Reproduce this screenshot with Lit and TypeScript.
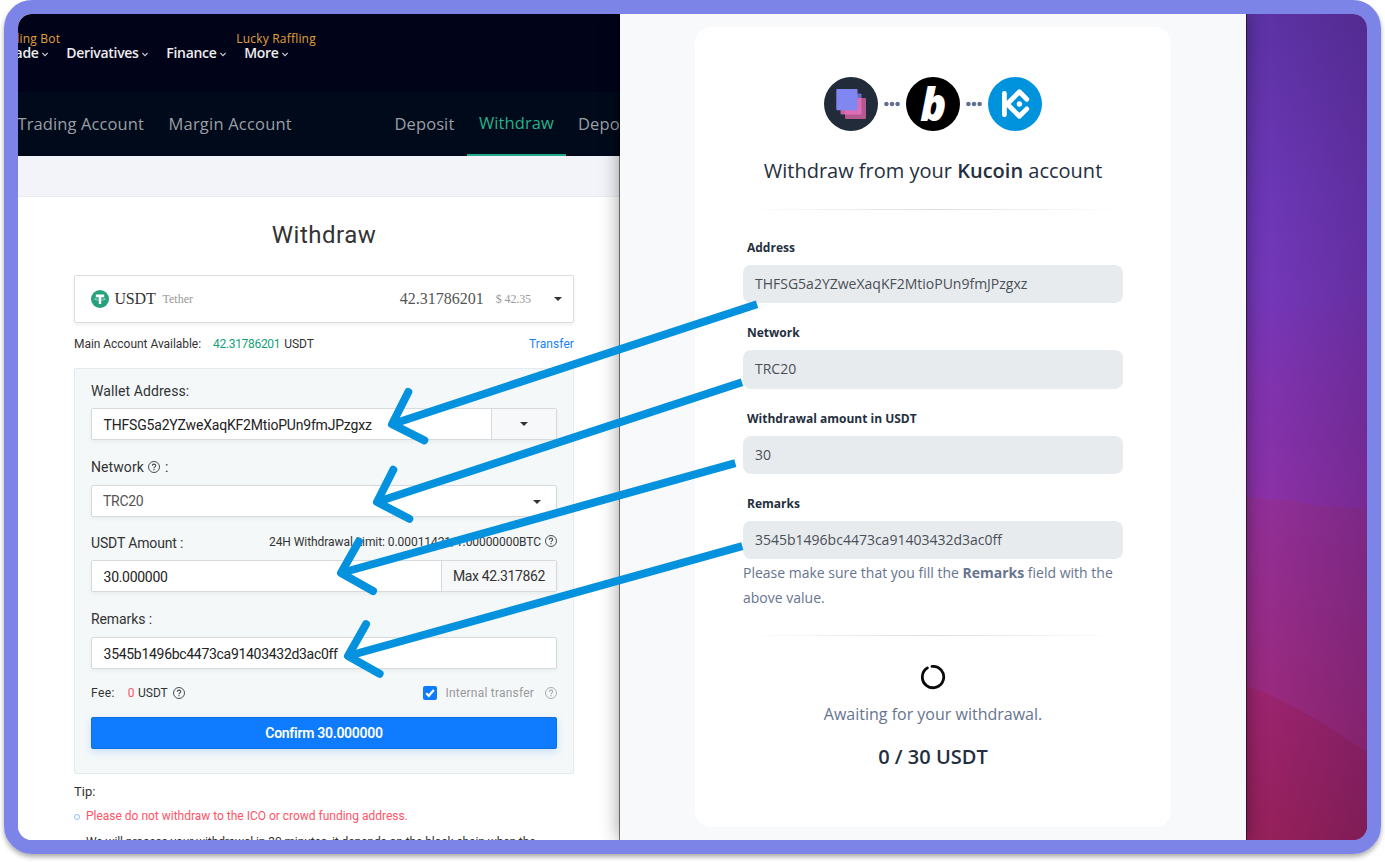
import { LitElement, html, svg, css } from "lit";
import { customElement } from "lit/decorators.js";

@customElement("help-icon")
class HelpIcon extends LitElement {
  static styles = css`
    :host { display: block; flex: none; width: 12px; height: 12px; color: #444; }
    svg { display: block; }
  `;
  render() {
    return html`<svg width="12" height="12" viewBox="0 0 12 12" fill="none" stroke="currentColor">
      <circle cx="6" cy="6" r="5.5" stroke-width=".95"></circle>
      <path d="M4.3 4.8C4.3 2.6 7.7 2.6 7.7 4.7C7.7 5.9 6 5.8 6 7.2" stroke-width="1.05"></path>
      <path d="M6 8.1V9.2" stroke-width="1.1"></path>
    </svg>`;
  }
}

@customElement("exchange-pane")
class ExchangePane extends LitElement {
  static styles = css`
    :host { display: flex; flex-direction: column; overflow: hidden; background: #fff; color: #333; font-family: Roboto, "Noto Sans", sans-serif; white-space: nowrap; }
    .nav { flex: none; height: 78px; background: #010419; display: flex; gap: 18.7px; padding-top: 29px; box-sizing: border-box; font: 600 14px/20px "Open Sans", sans-serif; letter-spacing: -.3px; color: #ededf0; }
    .item { position: relative; height: 20px; display: flex; align-items: center; gap: 3px; flex: none; }
    .item:first-child { margin-left: -16.8px; }
    .item svg { margin-top: 2px; }
    .badge { position: absolute; left: -8px; top: -14px; font: 400 12px/20px "Open Sans", sans-serif; letter-spacing: .2px; color: #e0a03f; }
    .tabs { flex: none; height: 64px; background: #000a1a; display: flex; font: 400 16.5px/62px "Open Sans", sans-serif; letter-spacing: .1px; color: #9a9fa5; }
    .tab { flex: none; padding: 1px 12px 0; box-sizing: border-box; }
    .t1 { width: 138px; margin-left: -12.5px; }
    .t2 { width: 160px; padding-left: 25px; letter-spacing: .2px; }
    .t3 { width: 83px; margin-left: 80px; padding-left: 11px; }
    .t4 { width: 99px; border-bottom: 2px solid #23a889; color: #23b38e; padding: 0; text-align: center; margin-left: .5px; }
    .band { flex: none; height: 41px; background: #f3f4f9; border-bottom: 1px solid #ececf0; box-sizing: border-box; }
    .body { width: 500px; margin-left: 56px; flex: none; }
    .title { height: 78px; display: flex; align-items: center; justify-content: center; font-size: 24px; letter-spacing: .5px; padding-bottom: 2px; box-sizing: border-box; }
    .coin { height: 48px; box-sizing: border-box; border: 1px solid #dadddf; border-radius: 2px; box-shadow: 0 2px 4px rgba(0,0,0,.06); background: #fff; display: flex; align-items: center; padding: 0 11px 0 16px; font: 16px "Liberation Serif", serif; }
    .sym { margin-left: 5.5px; letter-spacing: -.2px; }
    .small { font-size: 12px; color: #999; }
    .name { margin-left: 7px; flex: 1; }
    .bal { color: #555; }
    .usd { margin: 0 23px 0 12px; letter-spacing: -.1px; }
    .caret { width: 0; height: 0; flex: none; border: 4px solid transparent; border-top-color: #333; border-bottom: 0; }
    .avail { height: 45px; display: flex; align-items: center; font-size: 12px; padding-bottom: 3px; box-sizing: border-box; letter-spacing: -.04px; }
    .num { color: #14a077; margin: 0 4px 0 12px; letter-spacing: -.32px; }
    .link { margin-left: auto; color: #1880ff; letter-spacing: .08px; }
    .panel { height: 406px; box-sizing: border-box; border: 1px solid #e4ebee; border-radius: 2px; background: #f4f8f9; padding: 0 16px; }
    .lab { height: 39px; box-sizing: border-box; display: flex; align-items: center; font-size: 14px; }
    .l1 { padding-top: 5px; letter-spacing: .09px; }
    .l2 { height: 45px; padding-top: 9px; letter-spacing: .08px; }
    .l2 help-icon { margin: 0 5px 0 4px; }
    .l3 { height: 43px; padding-top: 9px; letter-spacing: -.15px; }
    .l4 { height: 45px; padding-top: 9px; letter-spacing: -.1px; }
    .limit { margin-left: auto; margin-right: 4px; font-size: 12px; letter-spacing: -.068px; padding-bottom: 2px; }
    .up { margin-bottom: 4px; }
    .box { height: 32px; box-sizing: border-box; border: 1px solid #d6dadd; border-radius: 2px; background: #fff; box-shadow: 0 2px 4px rgba(0,0,0,.05); display: flex; align-items: stretch; font-size: 14px; letter-spacing: -.3px; }
    .val { flex: 1; display: flex; align-items: center; padding: 2px 0 0 11.6px; color: #222; }
    .addr { letter-spacing: -.19px; }
    .sel { color: #555; padding: 0 0 0 11px; }
    .drop { display: flex; align-items: center; padding: 2px 15px 0 0; }
    .end { width: 65px; display: flex; align-items: center; justify-content: center; box-sizing: border-box; background: #f7f8fa; border-left: 1px solid #d6dadd; letter-spacing: -.37px; }
    .max { width: 115px; }
    .fee { height: 48px; display: flex; align-items: center; font-size: 12px; padding-bottom: 1px; box-sizing: border-box; }
    .feelab { letter-spacing: .4px; }
    .red { color: #ff5468; margin: 0 3.5px 0 13px; }
    .fee help-icon { margin-left: 5.5px; }
    .chk { margin: 1px 9px 0 auto; width: 14px; height: 14px; border-radius: 2px; background: #0f7cff; }
    .chk svg { display: block; }
    .grey { color: #999; letter-spacing: .21px; }
    .fee .pale { margin-left: 11px; color: #aaa; }
    .btn { height: 32px; display: flex; align-items: center; justify-content: center; background: #0f7cff; border: 1px solid #1070dc; box-sizing: border-box; border-radius: 2px; box-shadow: 0 3px 8px rgba(15,124,255,.18); color: #fff; font-weight: 600; font-size: 14px; letter-spacing: -.28px; }
    .tip { height: 36px; line-height: 35px; font-size: 13px; }
    .li { height: 26px; display: flex; align-items: flex-start; gap: 6px; font-size: 12px; line-height: 13px; letter-spacing: -.1px; color: #333; }
    .warn { color: #ff5468; letter-spacing: -.01px; }
    .dot { width: 3px; height: 3px; margin-top: 4px; border: 1.5px solid #8ec3f7; border-radius: 50%; flex: none; box-sizing: content-box; padding: .5px; }
  `;
  chev() {
    return html`<svg width="6" height="5" viewBox="0 0 6 5" fill="none" stroke="#c9cad2" stroke-width="1.1"><path d="M.4 1L3 3.6L5.6 1"></path></svg>`;
  }
  render() {
    return html`
      <div class="nav">
        <div class="item"><span class="badge">Trading Bot</span>Trade${this.chev()}</div>
        <div class="item">Derivatives${this.chev()}</div>
        <div class="item">Finance${this.chev()}</div>
        <div class="item"><span class="badge">Lucky Raffling</span>More${this.chev()}</div>
      </div>
      <div class="tabs">
        <div class="tab t1">Trading Account</div><div class="tab t2">Margin Account</div>
        <div class="tab t3">Deposit</div><div class="tab t4">Withdraw</div><div class="tab">Deposit</div>
      </div>
      <div class="band"></div>
      <div class="body">
        <div class="title">Withdraw</div>
        <div class="coin">
          <svg width="18" height="18" viewBox="0 0 18 18"><circle cx="9" cy="9" r="9" fill="#26a17b"></circle>
            <path d="M4.8 4.6H13.2V7H10.2V14H7.8V7H4.8Z" fill="#fff"></path>
            <ellipse cx="9" cy="9" rx="5.4" ry="1.2" fill="none" stroke="#fff" stroke-width=".6" opacity=".8"></ellipse></svg>
          <span class="sym">USDT</span><span class="small name">Tether</span>
          <span class="bal">42.31786201</span><span class="small usd">$ 42.35</span><i class="caret"></i>
        </div>
        <div class="avail"><span>Main Account Available:</span><span class="num">42.31786201</span><span>USDT</span><span class="link">Transfer</span></div>
        <div class="panel">
          <div class="lab l1">Wallet Address:</div>
          <div class="box"><div class="val addr">THFSG5a2YZweXaqKF2MtioPUn9fmJPzgxz</div><div class="end"><i class="caret"></i></div></div>
          <div class="lab l2">Network<help-icon></help-icon>:</div>
          <div class="box"><div class="val sel">TRC20</div><div class="drop"><i class="caret"></i></div></div>
          <div class="lab l3"><span>USDT Amount :</span><span class="limit">24H Withdrawal Limit: 0.00011421/1.00000000BTC</span><help-icon class="up"></help-icon></div>
          <div class="box"><div class="val">30.000000</div><div class="end max">Max 42.317862</div></div>
          <div class="lab l4">Remarks :</div>
          <div class="box"><div class="val">3545b1496bc4473ca91403432d3ac0ff</div></div>
          <div class="fee"><span class="feelab">Fee:</span><span class="red">0</span><span>USDT</span><help-icon></help-icon>
            <span class="chk"><svg width="14" height="14" viewBox="0 0 14 14" fill="none" stroke="#fff" stroke-width="2.2"><path d="M3.3 7.3L5.8 9.8L10.8 4"></path></svg></span>
            <span class="grey">Internal transfer</span><help-icon class="pale"></help-icon></div>
          <div class="btn">Confirm 30.000000</div>
        </div>
        <div class="tip">Tip:</div>
        <div class="li"><i class="dot"></i><span class="warn">Please do not withdraw to the ICO or crowd funding address.</span></div>
        <div class="li"><i class="dot"></i><span>We will process your withdrawal in 30 minutes, it depends on the block chain when the</span></div>
      </div>`;
  }
}

@customElement("payment-pane")
class PaymentPane extends LitElement {
  static styles = css`
    :host { display: flex; justify-content: flex-start; box-sizing: border-box; padding: 13px 0 0 75px; background: #f8f9fb; font-family: "Open Sans", sans-serif; color: #252f40; z-index: 1; box-shadow: 0 0 0 1px rgba(0,0,0,.5), 0 0 18px rgba(0,0,0,.42); }
    .card { width: 476px; height: 800px; background: #fff; border-radius: 16px; box-sizing: border-box; padding: 50px 48px 0; }
    .logos { display: flex; justify-content: center; align-items: center; gap: 6px; height: 54px; }
    svg { display: block; }
    .head { height: 78px; display: flex; align-items: center; justify-content: center; white-space: pre; font-size: 20px; padding-top: 1px; box-sizing: border-box; }
    b { font-weight: 600; }
    .hr { height: 1px; background: linear-gradient(90deg, transparent, rgba(0,0,0,.13), transparent); }
    .fields { padding-top: 20.9px; }
    .field { height: 85.4px; display: flex; flex-direction: column; }
    .lab { height: 34px; line-height: 34px; margin-left: 4px; font-size: 12px; font-weight: 700; }
    .inp { height: 38.4px; line-height: 38px; border-radius: 8px; background: #e8ebee; padding-left: 12px; font-size: 14px; color: #495057; }
    .field:last-child { height: 73.1px; }
    .hint { height: 75px; font-size: 14px; line-height: 25px; color: #67748e; box-sizing: border-box; }
    .hint b { font-weight: 700; }
    .spin { margin: 28px auto 0; width: 26px; }
    .wait { margin-top: 11px; text-align: center; font-size: 16px; line-height: 26px; color: #67748e; }
    .total { margin-top: 15px; text-align: center; font-size: 20px; line-height: 30px; font-weight: 600; }
  `;
  dots() {
    return html`<svg width="16" height="6" viewBox="0 0 16 6" fill="#62708f"><circle cx="2.4" cy="3" r="2.3"></circle><circle cx="8" cy="3" r="2.3"></circle><circle cx="13.6" cy="3" r="2.3"></circle></svg>`;
  }
  render() {
    const fields = [
      ["Address", "THFSG5a2YZweXaqKF2MtioPUn9fmJPzgxz"],
      ["Network", "TRC20"],
      ["Withdrawal amount in USDT", "30"],
      ["Remarks", "3545b1496bc4473ca91403432d3ac0ff"],
    ];
    return html`<div class="card">
      <div class="logos">
        <svg width="54" height="54" viewBox="0 0 54 54"><circle cx="27" cy="27" r="27" fill="#212b3a"></circle>
          <rect x="21" y="21" width="21" height="21" rx="1" fill="#b5588f"></rect>
          <path d="M16.5 33V36.5Q16.5 37.5 17.5 37.5H37.5V33Z" fill="#c960a4"></path>
          <path d="M33 16.5H36.5Q37.5 16.5 37.5 17.5V21H33Z" fill="#666dbd"></path>
          <rect x="21" y="21" width="16.5" height="16.5" fill="#dc6db6"></rect>
          <rect x="12.3" y="12" width="21.2" height="21.2" rx="1" fill="#8187f0"></rect></svg>
        ${this.dots()}
        <svg width="54" height="54" viewBox="0 0 54 54"><circle cx="27" cy="27" r="27"></circle>
          <text transform="translate(14.3 44.3) scale(.94 1)" font-family="Open Sans" font-weight="800" font-style="italic" font-size="46" fill="#fff">b</text></svg>
        ${this.dots()}
        <svg width="54" height="54" viewBox="0 0 54 54"><circle cx="27" cy="27" r="27" fill="#0093dd"></circle>
          <g fill="none" stroke="#fff" stroke-width="4.8" stroke-linecap="round" stroke-linejoin="round">
            <path d="M16.4 16.4V37.8"></path><path d="M38.8 22.2L31.4 14.8L19.2 27L31.4 39.3L38.8 31.9"></path></g>
          <circle cx="31.4" cy="27" r="2.7" fill="#fff"></circle></svg>
      </div>
      <div class="head">Withdraw from your <b>Kucoin</b> account</div>
      <div class="hr"></div>
      <div class="fields">${fields.map(([l, v]) => html`<div class="field"><div class="lab">${l}</div><div class="inp">${v}</div></div>`)}</div>
      <div class="hint">Please make sure that you fill the <b>Remarks</b> field with the above value.</div>
      <div class="hr"></div>
      <svg class="spin" width="26" height="26" viewBox="0 0 26 26" fill="none" stroke="#0a0a0a" stroke-width="2.8" stroke-linecap="round"><path d="M12 2.35A10.7 10.7 0 1 1 7.4 3.9"></path></svg>
      <div class="wait">Awaiting for your withdrawal.</div>
      <div class="total">0 / 30 USDT</div>
    </div>`;
  }
}

@customElement("app-root")
class AppRoot extends LitElement {
  static styles = css`
    :host { display: block; position: relative; width: 1385px; height: 862px; overflow: hidden; background: #fff; }
    .frame { margin-left: 4px; width: 1377px; height: 854px; box-sizing: border-box; border: 14px solid #7c84e8; border-radius: 28px; box-shadow: 0 3px 5px rgba(0,0,0,.33); display: flex; }
    .screen { flex: 1; display: grid; grid-template-columns: 602px 626px 121px; grid-template-rows: 826px; overflow: hidden; border-radius: 14px; }
    .wall svg { display: block; }
    .arrows { position: absolute; left: 0; top: 0; pointer-events: none; z-index: 2; }
  `;
  render() {
    const arrows = [
      [757, 304.2, 392, 424.2, 408.3, 392, 424.3, 440.3],
      [742, 382.2, 377, 502, 393.3, 469.8, 409.3, 518.8],
      [735.3, 463.2, 341, 573, 358.8, 541.5, 373, 591],
      [742.3, 546.2, 348, 656, 366, 624.2, 379.6, 673.8],
    ];
    return html`
      <div class="frame"><div class="screen">
        <exchange-pane></exchange-pane>
        <payment-pane></payment-pane>
        <div class="wall"><svg width="121" height="826" viewBox="0 0 121 826">
          <defs>
            <linearGradient id="a" x2="0" y2="1"><stop offset="0" stop-color="#5c32a4"></stop><stop offset=".22" stop-color="#6c37b6"></stop><stop offset=".35" stop-color="#7437b8"></stop><stop offset=".45" stop-color="#7f34b0"></stop><stop offset=".6" stop-color="#8c31a6"></stop></linearGradient>
            <linearGradient id="b" x2="0" y1="484" y2="740" gradientUnits="userSpaceOnUse"><stop offset="0" stop-color="#902f98"></stop><stop offset="1" stop-color="#9c2876"></stop></linearGradient>
            <linearGradient id="c" x2="0" y2="1"><stop offset="0" stop-color="#9b2470"></stop><stop offset="1" stop-color="#95205a"></stop></linearGradient>
            <linearGradient id="d"><stop offset=".2" stop-color="#30104a" stop-opacity="0"></stop><stop offset="1" stop-color="#30104a" stop-opacity=".22"></stop></linearGradient>
          </defs>
          <rect width="121" height="826" fill="url(#a)"></rect>
          <path d="M0 302Q60 296 121 281V500H0Z" fill="#8a2a98" opacity=".07"></path>
          <path d="M0 484L40 486L75 492L121 495V826H0Z" fill="url(#b)"></path>
          <path d="M0 672L18 678L50 694L75 708L121 738V826H0Z" fill="url(#c)"></path>
          <rect width="121" height="826" fill="url(#d)"></rect>
        </svg></div>
      </div></div>
      <svg class="arrows" width="1385" height="862" viewBox="0 0 1385 862" fill="none" stroke="#0492df" stroke-width="8">
        ${arrows.map(([a, b, x, y, ux, uy, dx, dy]) => svg`<path d="M${a} ${b}L${x} ${y}"></path><path d="M${ux} ${uy}L${x} ${y}L${dx} ${dy}" stroke-linecap="round" stroke-linejoin="round"></path>`)}
      </svg>`;
  }
}
